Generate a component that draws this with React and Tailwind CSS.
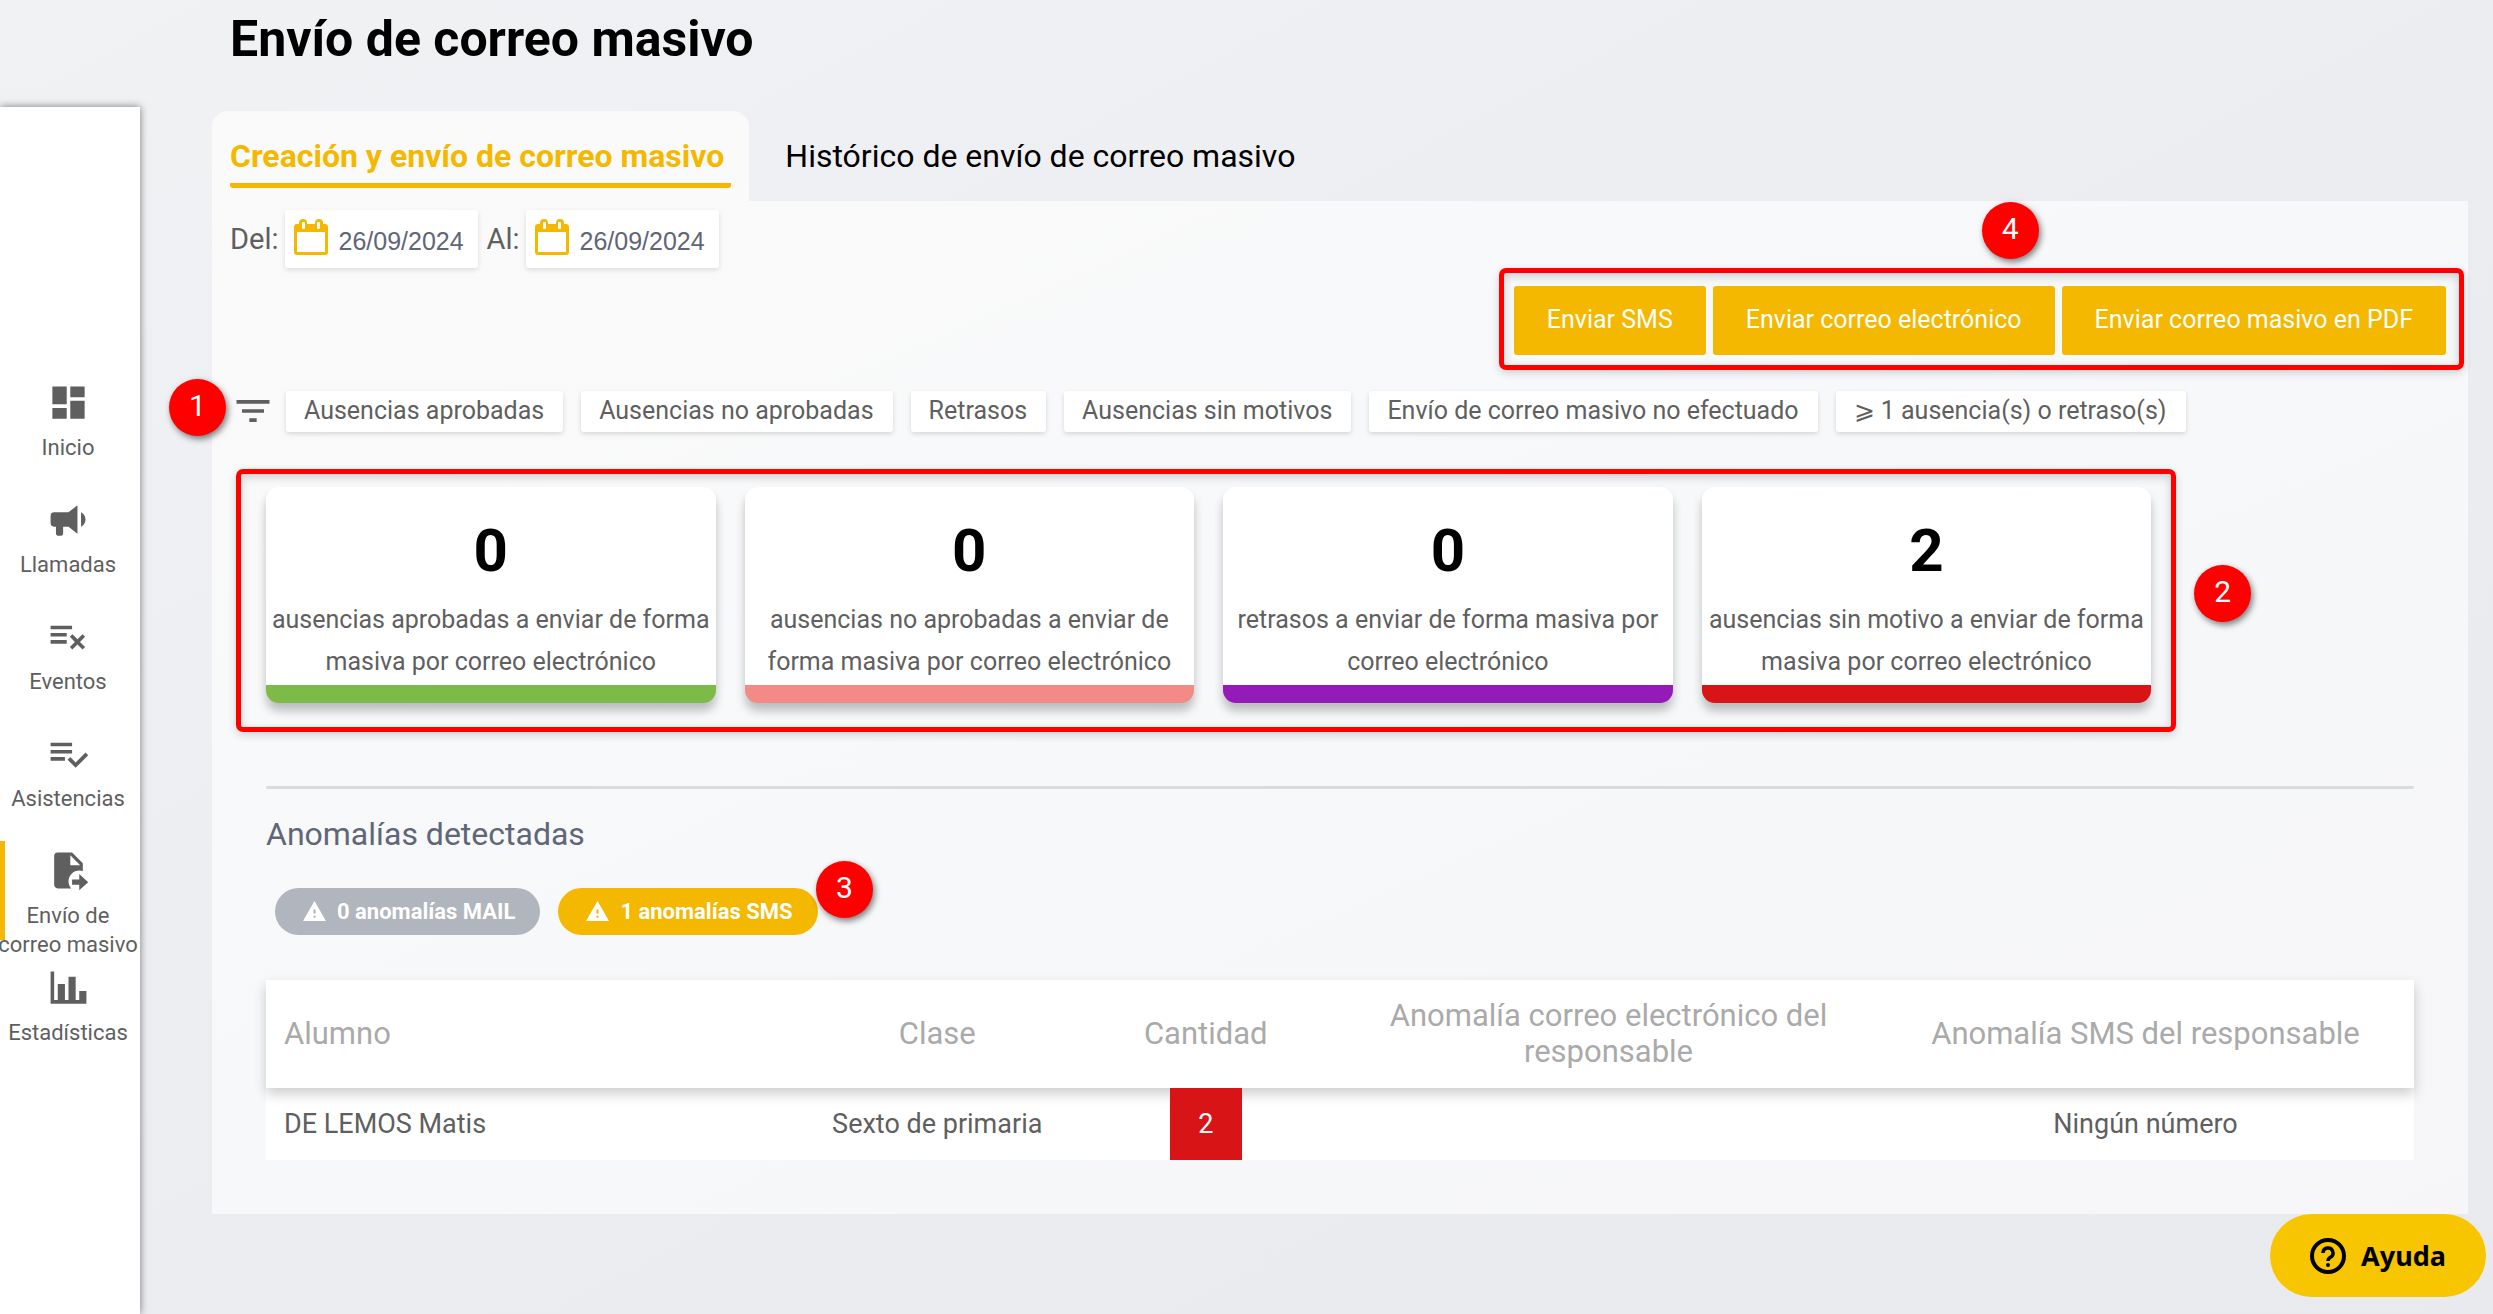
import clsx from "clsx"

const ICONS = {
  dashboard: "M13,3V9H21V3M13,21H21V11H13M3,21H11V15H3M3,13H11V3H3V13Z",
  bullhorn: "M12,8H4A2,2 0 0,0 2,10V14A2,2 0 0,0 4,16H5V20A1,1 0 0,0 6,21H8A1,1 0 0,0 9,20V16H12L17,20V4L12,8M21.5,12C21.5,13.71 20.54,15.26 19,16V8C20.53,8.75 21.5,10.3 21.5,12Z",
  listRemove: "M2,6V8H14V6H2M2,10V12H11V10H2M14.17,10.76L12.76,12.17L15.59,15L12.76,17.83L14.17,19.24L17,16.41L19.83,19.24L21.24,17.83L18.41,15L21.24,12.17L19.83,10.76L17,13.59L14.17,10.76M2,14V16H11V14H2Z",
  listCheck: "M14,10H2V12H14V10M14,6H2V8H14V6M2,16H10V14H2V16M21.5,11.5L23,13L16,20L11.5,15.5L13,14L16,17L21.5,11.5Z",
  fileMove: "M14,17H18V14L23,18.5L18,23V20H14V17M13,9H18.5L13,3.5V9M6,2H14L20,8V12.34C19.37,12.12 18.7,12 18,12A6,6 0 0,0 12,18C12,19.54 12.58,20.94 13.53,22H6C4.89,22 4,21.1 4,20V4A2,2 0 0,1 6,2Z",
  chart: "M22,21H2V3H4V19H6V10H10V19H12V6H16V19H18V14H22V21Z",
  filter: "M10,18H14V16H10V18M3,6V8H21V6H3M6,13H18V11H6V13Z",
  alert: "M13,14H11V10H13M13,18H11V16H13M1,21H23L12,2L1,21Z",
}

const Icon = ({ name, className }) => (
  <svg viewBox="0 0 24 24" fill="currentColor" className={className} aria-hidden="true">
    <path d={ICONS[name]} />
  </svg>
)

const CalendarIcon = () => (
  <svg viewBox="0 0 34 36" className="h-9 w-[34px] shrink-0" aria-hidden="true">
    <rect x="0" y="5" width="34" height="31" rx="3" fill="#f4b800" />
    <rect x="3" y="13" width="28" height="20" fill="#fff" />
    <rect x="5" y="0" width="8" height="13" rx="4" fill="#f4b800" />
    <rect x="21" y="0" width="8" height="13" rx="4" fill="#f4b800" />
    <rect x="8" y="3" width="3" height="7" rx="1" fill="#fff" />
    <rect x="23" y="3" width="3" height="7" rx="1" fill="#fff" />
  </svg>
)

const navItems = [
  { icon: "dashboard", label: "Inicio" },
  { icon: "bullhorn", label: "Llamadas" },
  { icon: "listRemove", label: "Eventos" },
  { icon: "listCheck", label: "Asistencias" },
  { icon: "fileMove", label: "Envío de correo masivo", active: true },
  { icon: "chart", label: "Estadísticas" },
]

const filters = [
  "Ausencias aprobadas",
  "Ausencias no aprobadas",
  "Retrasos",
  "Ausencias sin motivos",
  "Envío de correo masivo no efectuado",
  "⩾ 1 ausencia(s) o retraso(s)",
]

const cards = [
  { count: 0, text: "ausencias aprobadas a enviar de forma masiva por correo electrónico", color: "border-[#7dbb48]" },
  { count: 0, text: "ausencias no aprobadas a enviar de forma masiva por correo electrónico", color: "border-[#f48a85]" },
  { count: 0, text: "retrasos a enviar de forma masiva por correo electrónico", color: "border-[#951bb9]" },
  { count: 2, text: "ausencias sin motivo a enviar de forma masiva por correo electrónico", color: "border-[#d81416]" },
]

const anomalies = [
  { student: "DE LEMOS Matis", group: "Sexto de primaria", count: 2, mail: "", sms: "Ningún número" },
]

const Step = ({ children, className }) => (
  <span
    className={clsx(
      "absolute z-20 flex h-[57px] w-[57px] items-center justify-center rounded-full bg-[#ff0000] pb-1 text-[30px] leading-none text-white shadow-[2px_3px_6px_rgba(0,0,0,0.5)]",
      className
    )}
  >
    {children}
  </span>
)

const highlight =
  "rounded-[7px] border-[5px] border-[#ff0000] shadow-[0_3px_8px_rgba(0,0,0,0.16),inset_0_3px_10px_rgba(0,0,0,0.18)]"

const DateField = ({ id, label }) => (
  <div className="flex items-center gap-[7px]">
    <label htmlFor={id} className="text-[29px] leading-8 text-[#5f5f5f]">{label}</label>
    <div className="flex h-[58px] items-start gap-[10px] rounded-[3px] bg-white px-[9px] pt-[9px] shadow-[0_2px_5px_rgba(0,0,0,0.12)]">
      <CalendarIcon />
      <input
        id={id}
        type="text"
        defaultValue="26/09/2024"
        className="h-11 w-[131px] bg-transparent font-['Liberation_Sans',sans-serif] text-[25px] leading-[44px] text-[#5f6677] outline-none"
      />
    </div>
  </div>
)

const Sidebar = () => (
  <nav className="mt-[107px] w-[140px] shrink-0 bg-white pt-[266px] shadow-[0_0_8px_rgba(0,0,0,0.5)]">
    <ul className="flex flex-col gap-[18px]">
      {navItems.map((item) => (
        <li key={item.label}>
          <a
            href="#"
            className={clsx(
              "flex h-[99px] flex-col items-center border-l-[5px] pt-2 pr-[9px] text-center text-[22px] leading-[29px] text-[#5f5f5f]",
              item.active ? "border-[#f4b800]" : "border-transparent"
            )}
          >
            <Icon name={item.icon} className="mb-[9px] h-[43px] w-[43px] shrink-0" />
            <span className="-mx-2 block w-[140px]">{item.label}</span>
          </a>
        </li>
      ))}
    </ul>
  </nav>
)

const Summary = () => (
  <div className="mt-9 flex">
    <div className={clsx("relative ml-6 grid w-[86%] grid-cols-4 gap-[29px] pt-[13px] pr-5 pb-6 pl-[25px]", highlight)}>
      {cards.map((card) => (
        <div
          key={card.text}
          className={clsx(
            "rounded-[13px] border-b-[18px] bg-white text-center shadow-[0_8px_10px_rgba(0,0,0,0.24)]",
            card.color
          )}
        >
          <p className="pt-[29px] text-[60px] leading-[70px] font-bold text-black">{card.count}</p>
          <p className="pt-[13px] pb-[2px] text-[25px] leading-[42px] text-[#5f5f5f]">{card.text}</p>
        </div>
      ))}
      <Step className="top-[91px] left-[calc(100%+23px)]">2</Step>
    </div>
  </div>
)

const AnomalyTable = () => (
  <table className="mt-[45px] w-full table-fixed bg-white text-center">
    <colgroup>
      <col className="w-1/4" />
      <col className="w-1/8" />
      <col className="w-1/8" />
      <col className="w-1/4" />
      <col className="w-1/4" />
    </colgroup>
    <thead className="relative shadow-[0_6px_12px_rgba(0,0,0,0.2)]">
      <tr className="h-[108px] text-[31px] leading-9 text-[#aaaaaa]">
        <th className="px-[18px] text-left font-normal">Alumno</th>
        <th className="font-normal">Clase</th>
        <th className="font-normal">Cantidad</th>
        <th className="px-10 font-normal">Anomalía correo electrónico del responsable</th>
        <th className="font-normal">Anomalía SMS del responsable</th>
      </tr>
    </thead>
    <tbody>
      {anomalies.map((row) => (
        <tr key={row.student} className="h-[72px] text-[27px] leading-9 text-[#5f5f5f]">
          <td className="px-[18px] text-left">{row.student}</td>
          <td>{row.group}</td>
          <td className="p-0">
            <span className="relative mx-auto flex h-[72px] w-[72px] items-center justify-center bg-[#d81416] text-white">
              {row.count}
            </span>
          </td>
          <td>{row.mail}</td>
          <td>{row.sms}</td>
        </tr>
      ))}
    </tbody>
  </table>
)

const App = () => {
  return (
    <div className="relative flex min-h-screen bg-linear-to-br from-[#f1f2f4] via-[#ecedf1] to-[#e9eaee] font-[Roboto,sans-serif]">
      <Sidebar />

      <main className="min-w-0 flex-1 pr-[25px] pl-[72px]">
        <h1 className="h-[111px] pt-[9px] pl-[18px] text-[50px] leading-[60px] font-bold text-black">
          Envío de correo masivo
        </h1>

        <div className="flex h-[90px] items-stretch text-[32px] leading-10">
          <button
            type="button"
            className="rounded-t-[16px] bg-[#fafafa] px-[18px] pt-[25px] pb-[13px] font-bold text-[#f4b800]"
          >
            <span className="block rounded-[3px] border-b-[5px] border-[#f4b800] pr-[7px] pb-[7px]">
              Creación y envío de correo masivo
            </span>
          </button>
          <button type="button" className="px-9 pt-[25px] pb-[25px] text-black">
            Histórico de envío de correo masivo
          </button>
        </div>

        <section className="bg-linear-to-br from-[#fafafa] via-[#f7f8fa] to-[#f6f6f8] pb-[54px]">
          <div className="flex gap-2 pt-[9px] pl-[18px]">
            <DateField id="from" label="Del:" />
            <DateField id="to" label="Al:" />
          </div>

          <div className="flex justify-end pr-1">
            <div className={clsx("relative flex gap-[7px] pt-[13px] pr-[13px] pb-[10px] pl-[10px]", highlight)}>
              {["Enviar SMS", "Enviar correo electrónico", "Enviar correo masivo en PDF"].map((label) => (
                <button
                  key={label}
                  type="button"
                  className="h-[69px] rounded-[3px] bg-[#f4b800] px-[33px] pb-px text-[25px] leading-8 text-white"
                >
                  {label}
                </button>
              ))}
              <Step className="-top-[71px] left-[478px]">4</Step>
            </div>
          </div>

          <div className="relative mt-[19px] flex items-center gap-[18px] pl-[19px] text-[#5f5f5f]">
            <Step className="-top-[10px] -left-[43px]">1</Step>
            <button type="button" aria-label="Filtrar" className="-mr-[7px]">
              <Icon name="filter" className="h-[44px] w-[44px]" />
            </button>
            {filters.map((label) => (
              <button
                key={label}
                type="button"
                className="h-[41px] rounded-[3px] bg-white pr-[19px] pl-[18px] text-[25px] leading-8 shadow-[0_2px_5px_rgba(0,0,0,0.14)]"
              >
                {label}
              </button>
            ))}
          </div>

          <Summary />

          <div className="pr-[54px] pl-[54px]">
            <hr className="mt-[54px] rounded border-t-[3px] border-[#dadcdc]" />
            <h2 className="mt-6 text-[32px] leading-[42px] text-[#5f6677]">Anomalías detectadas</h2>
            <div className="relative mt-[33px] ml-[9px] flex gap-[18px] text-[22px] leading-8 font-bold text-white">
              <button type="button" className="flex h-[47px] items-center gap-[10px] rounded-full bg-[#b0b5be] pr-[25px] pl-[27px]">
                <Icon name="alert" className="h-[25px] w-[25px]" />
                0 anomalías MAIL
              </button>
              <button type="button" className="flex h-[47px] items-center gap-[10px] rounded-full bg-[#f4b800] pr-[25px] pl-[27px]">
                <Icon name="alert" className="h-[25px] w-[25px]" />
                1 anomalías SMS
              </button>
              <Step className="-top-[27px] left-[541px] font-normal">3</Step>
            </div>
            <AnomalyTable />
          </div>
        </section>
      </main>

      <button
        type="button"
        className="fixed right-[7px] bottom-[17px] flex h-[83px] items-center gap-[15px] rounded-full bg-[#f7c600] px-10 font-['Noto_Sans',sans-serif] text-[27px] leading-9 font-bold text-black"
      >
        <svg viewBox="0 0 36 36" fill="none" stroke="currentColor" className="h-9 w-9" aria-hidden="true">
          <circle cx="18" cy="18" r="16" strokeWidth="4" />
          <path d="M13 15a5 5 0 1 1 7.500 4.300C18.700 20.300 18 21 18 23" strokeWidth="3.500" />
          <circle cx="18" cy="27" r="2" fill="currentColor" stroke="none" />
        </svg>
        Ayuda
      </button>
    </div>
  )
}

export default App
